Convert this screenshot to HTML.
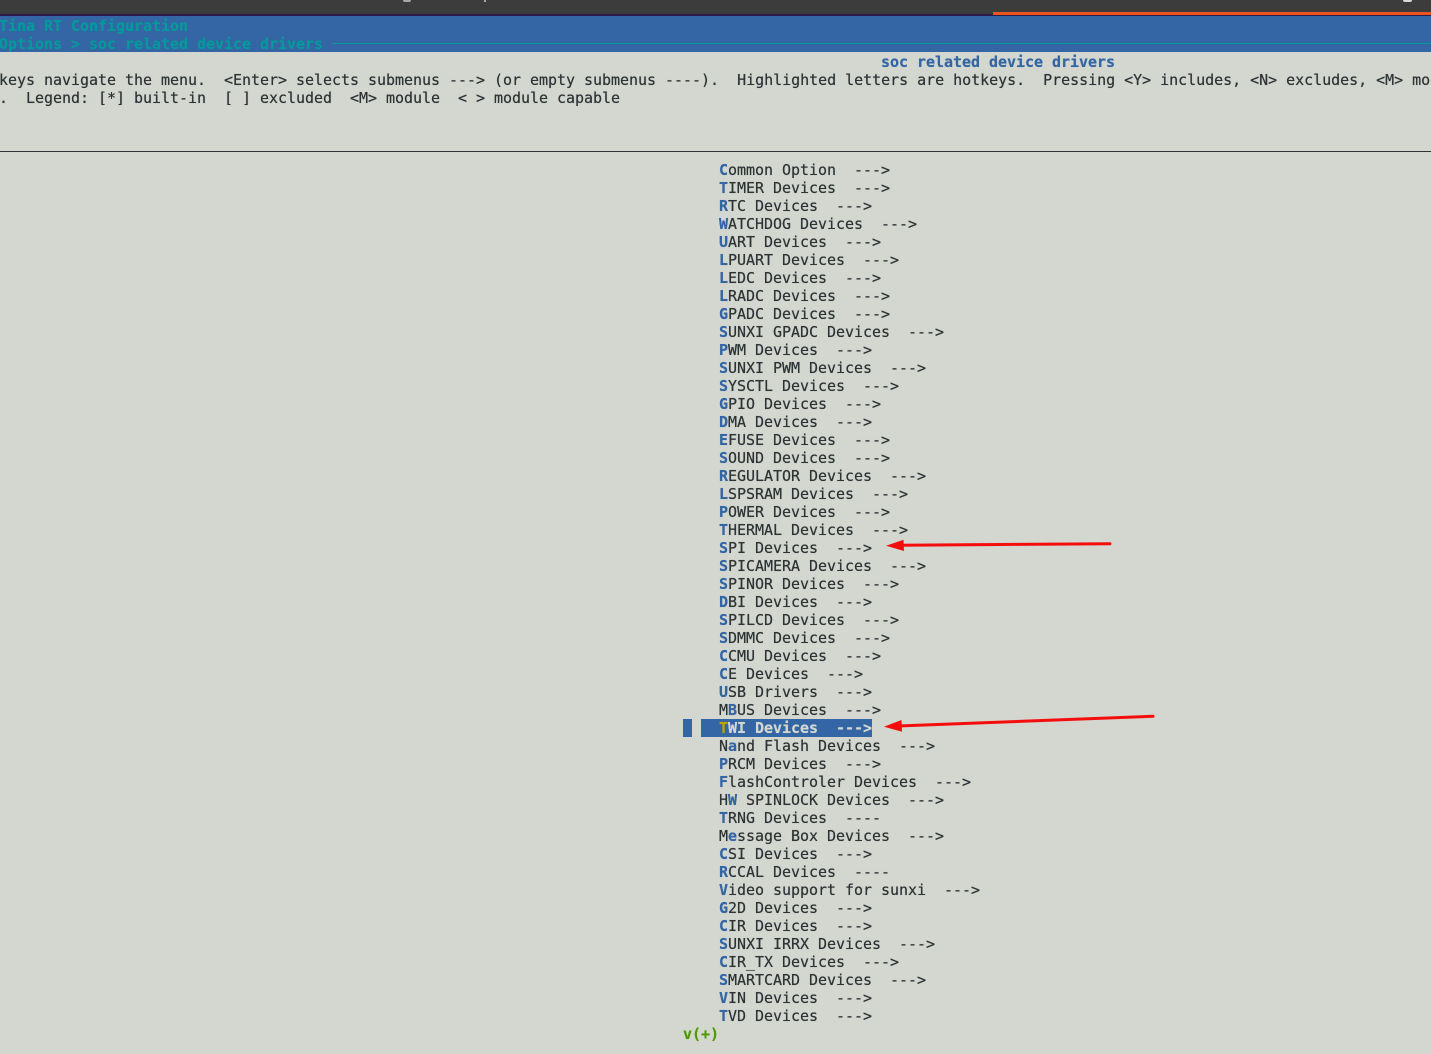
<!DOCTYPE html>
<html><head><meta charset="utf-8"><style>
html,body{margin:0;padding:0;background:#d3d7cf;overflow:hidden}
#p{position:relative;width:1431px;height:1054px;overflow:hidden;background:#d3d7cf;font-family:"DejaVu Sans Mono","Liberation Mono",monospace;font-size:15px;color:#2e3436}
.a{position:absolute;white-space:pre;line-height:18px;height:18px;letter-spacing:-0.03px;text-shadow:0 0 .5px currentColor}
.m{left:719px}
.m b{color:#3465a4}
.r{position:absolute}
</style></head><body><div id="p">
<div class="r" style="left:0;top:0;width:1431px;height:15px;background:#3c3c3c"></div>
<div class="r" style="left:0;top:14px;width:993px;height:2px;background:#2c1a4a"></div>
<div class="r" style="left:993px;top:12px;width:438px;height:3px;background:#e95420"></div>
<div class="r" style="left:993px;top:15px;width:438px;height:1px;background:#2c1a4a"></div>
<div class="r" style="left:403px;top:0;width:8px;height:2px;background:#a8a8a8;border-radius:0 0 4px 4px"></div>
<div class="r" style="left:484px;top:0;width:2px;height:2px;background:#a8a8a8"></div>
<div class="r" style="left:1403px;top:0;width:9px;height:2px;background:#d8d8d8;border-radius:0 0 4px 4px"></div>
<div class="r" style="left:0;top:16px;width:1431px;height:36px;background:#3465a4"></div>
<div class="r" style="left:332px;top:43px;width:1099px;height:1px;background:#06989a"></div>
<div class="a" style="left:-1px;top:17px;color:#06989a;font-weight:bold">Tina RT Configuration</div>
<div class="a" style="left:-1px;top:35px;color:#06989a;font-weight:bold">Options &gt; soc related device drivers</div>
<div class="a" style="left:881px;top:53px;color:#3465a4;font-weight:bold">soc related device drivers</div>
<div class="a" style="left:-1px;top:71px">keys navigate the menu.  &lt;Enter&gt; selects submenus ---&gt; (or empty submenus ----).  Highlighted letters are hotkeys.  Pressing &lt;Y&gt; includes, &lt;N&gt; excludes, &lt;M&gt; modularizes</div>
<div class="a" style="left:-1px;top:89px">.  Legend: [*] built-in  [ ] excluded  &lt;M&gt; module  &lt; &gt; module capable</div>
<div class="r" style="left:0;top:151px;width:1431px;height:1px;background:#2e3436"></div>
<div class="a m" style="top:161px"><b>C</b>ommon Option  ---&gt;</div>
<div class="a m" style="top:179px"><b>T</b>IMER Devices  ---&gt;</div>
<div class="a m" style="top:197px"><b>R</b>TC Devices  ---&gt;</div>
<div class="a m" style="top:215px"><b>W</b>ATCHDOG Devices  ---&gt;</div>
<div class="a m" style="top:233px"><b>U</b>ART Devices  ---&gt;</div>
<div class="a m" style="top:251px"><b>L</b>PUART Devices  ---&gt;</div>
<div class="a m" style="top:269px"><b>L</b>EDC Devices  ---&gt;</div>
<div class="a m" style="top:287px"><b>L</b>RADC Devices  ---&gt;</div>
<div class="a m" style="top:305px"><b>G</b>PADC Devices  ---&gt;</div>
<div class="a m" style="top:323px"><b>S</b>UNXI GPADC Devices  ---&gt;</div>
<div class="a m" style="top:341px"><b>P</b>WM Devices  ---&gt;</div>
<div class="a m" style="top:359px"><b>S</b>UNXI PWM Devices  ---&gt;</div>
<div class="a m" style="top:377px"><b>S</b>YSCTL Devices  ---&gt;</div>
<div class="a m" style="top:395px"><b>G</b>PIO Devices  ---&gt;</div>
<div class="a m" style="top:413px"><b>D</b>MA Devices  ---&gt;</div>
<div class="a m" style="top:431px"><b>E</b>FUSE Devices  ---&gt;</div>
<div class="a m" style="top:449px"><b>S</b>OUND Devices  ---&gt;</div>
<div class="a m" style="top:467px"><b>R</b>EGULATOR Devices  ---&gt;</div>
<div class="a m" style="top:485px"><b>L</b>SPSRAM Devices  ---&gt;</div>
<div class="a m" style="top:503px"><b>P</b>OWER Devices  ---&gt;</div>
<div class="a m" style="top:521px"><b>T</b>HERMAL Devices  ---&gt;</div>
<div class="a m" style="top:539px"><b>S</b>PI Devices  ---&gt;</div>
<div class="a m" style="top:557px"><b>S</b>PICAMERA Devices  ---&gt;</div>
<div class="a m" style="top:575px"><b>S</b>PINOR Devices  ---&gt;</div>
<div class="a m" style="top:593px"><b>D</b>BI Devices  ---&gt;</div>
<div class="a m" style="top:611px"><b>S</b>PILCD Devices  ---&gt;</div>
<div class="a m" style="top:629px"><b>S</b>DMMC Devices  ---&gt;</div>
<div class="a m" style="top:647px"><b>C</b>CMU Devices  ---&gt;</div>
<div class="a m" style="top:665px"><b>C</b>E Devices  ---&gt;</div>
<div class="a m" style="top:683px"><b>U</b>SB Drivers  ---&gt;</div>
<div class="a m" style="top:701px">M<b>B</b>US Devices  ---&gt;</div>
<div class="r" style="left:683px;top:719px;width:9px;height:18px;background:#3465a4"></div>
<div class="r" style="left:701px;top:719px;width:171px;height:18px;background:#3465a4"></div>
<div class="a m" style="top:719px;color:#d3d7cf;font-weight:bold"><span style="color:#c4a000">T</span>WI Devices  ---&gt;</div>
<div class="a m" style="top:737px">N<b>a</b>nd Flash Devices  ---&gt;</div>
<div class="a m" style="top:755px"><b>P</b>RCM Devices  ---&gt;</div>
<div class="a m" style="top:773px"><b>F</b>lashControler Devices  ---&gt;</div>
<div class="a m" style="top:791px">H<b>W</b> SPINLOCK Devices  ---&gt;</div>
<div class="a m" style="top:809px"><b>T</b>RNG Devices  ----</div>
<div class="a m" style="top:827px">M<b>e</b>ssage Box Devices  ---&gt;</div>
<div class="a m" style="top:845px"><b>C</b>SI Devices  ---&gt;</div>
<div class="a m" style="top:863px"><b>R</b>CCAL Devices  ----</div>
<div class="a m" style="top:881px"><b>V</b>ideo support for sunxi  ---&gt;</div>
<div class="a m" style="top:899px"><b>G</b>2D Devices  ---&gt;</div>
<div class="a m" style="top:917px"><b>C</b>IR Devices  ---&gt;</div>
<div class="a m" style="top:935px"><b>S</b>UNXI IRRX Devices  ---&gt;</div>
<div class="a m" style="top:953px"><b>C</b>IR_TX Devices  ---&gt;</div>
<div class="a m" style="top:971px"><b>S</b>MARTCARD Devices  ---&gt;</div>
<div class="a m" style="top:989px"><b>V</b>IN Devices  ---&gt;</div>
<div class="a m" style="top:1007px"><b>T</b>VD Devices  ---&gt;</div>
<div class="a" style="left:683px;top:1025px;color:#4e9a06;font-weight:bold">v(+)</div>
<svg class="r" style="left:0;top:0" width="1431" height="1054" viewBox="0 0 1431 1054">
<path d="M900 545.3L1110 543.7" stroke="#f50d0d" stroke-width="3" stroke-linecap="round" fill="none"/>
<path d="M886 545.7L903.5 539.8L904 551Z" fill="#f50d0d"/>
<path d="M898 726L1153 716.3" stroke="#f50d0d" stroke-width="3" stroke-linecap="round" fill="none"/>
<path d="M884 726.7L901.5 720L902 731.8Z" fill="#f50d0d"/>
</svg>
</div></body></html>
